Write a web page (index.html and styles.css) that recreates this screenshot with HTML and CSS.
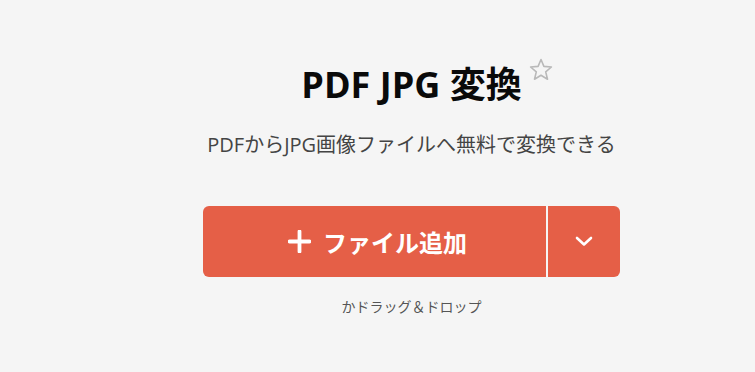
FILE: index.html
```html
<!DOCTYPE html>
<html lang="ja">
<head>
<meta charset="utf-8">
<link rel="stylesheet" href="styles.css">
</head>
<body>
<div class="page">
  <div class="hero">
    <div class="title-wrap">
      <h1 class="title">PDF JPG 変換</h1>
      <svg class="star" width="24" height="23" viewBox="0 0 24 23"><path d="M12 1.5 L14.9 8.4 L22.4 9 L16.7 13.9 L18.5 21.2 L12 17.3 L5.5 21.2 L7.3 13.9 L1.6 9 L9.1 8.4 Z" fill="none" stroke="#b9b9b9" stroke-width="1.6" stroke-linejoin="round"/></svg>
    </div>
    <p class="subtitle">PDFからJPG画像ファイルへ無料で変換できる</p>
    <div class="upload">
      <button class="upload-main">
        <svg class="plus" width="23" height="23" viewBox="0 0 23 23"><path d="M11.5 1.5 V21.5 M1.5 11.5 H21.5" stroke="#fff" stroke-width="3.8" stroke-linecap="round"/></svg>
        <span>ファイル追加</span>
      </button>
      <button class="upload-more">
        <svg width="18" height="11" viewBox="0 0 18 11"><path d="M2 2 L9 8.5 L16 2" fill="none" stroke="#fff" stroke-width="2.6" stroke-linecap="round" stroke-linejoin="round"/></svg>
      </button>
    </div>
    <p class="drop">かドラッグ＆ドロップ</p>
  </div>
</div>
</body>
</html>
```
FILE: styles.css
```css
html, body {
  margin: 0;
  padding: 0;
  background: #f5f5f5;
}
body {
  font-family: "Open Sans", "Noto Sans CJK JP", sans-serif;
  color: #222;
}
.page {
  padding-left: 68px;
  display: flex;
  justify-content: center;
}
.hero {
  display: flex;
  flex-direction: column;
  align-items: center;
  padding-top: 63px;
}
.title-wrap {
  position: relative;
}
.title {
  margin: 0;
  font-size: 36px;
  line-height: 44px;
  font-weight: 700;
  color: #0a0a0a;
}
.star {
  position: absolute;
  left: calc(100% + 7px);
  top: -5px;
}
.subtitle {
  margin: 24px 0 0;
  font-size: 20px;
  line-height: 28px;
  color: #444;
}
.upload {
  margin-top: 47px;
  display: flex;
  width: 417px;
  height: 71px;
  border-radius: 6px;
  overflow: hidden;
}
.upload button {
  border: 0;
  margin: 0;
  padding: 0;
  background: #e55f47;
  color: #fff;
  font-family: inherit;
  display: flex;
  align-items: center;
  justify-content: center;
}
.upload-main {
  width: 343px;
  gap: 12px;
  font-size: 24px;
  font-weight: 700;
  padding-left: 6px !important;
}
.upload-more {
  width: 72px;
  margin-left: 2px !important;
}
.drop {
  margin: 20px 0 0;
  font-size: 14px;
  line-height: 20px;
  color: #555;
}
```
